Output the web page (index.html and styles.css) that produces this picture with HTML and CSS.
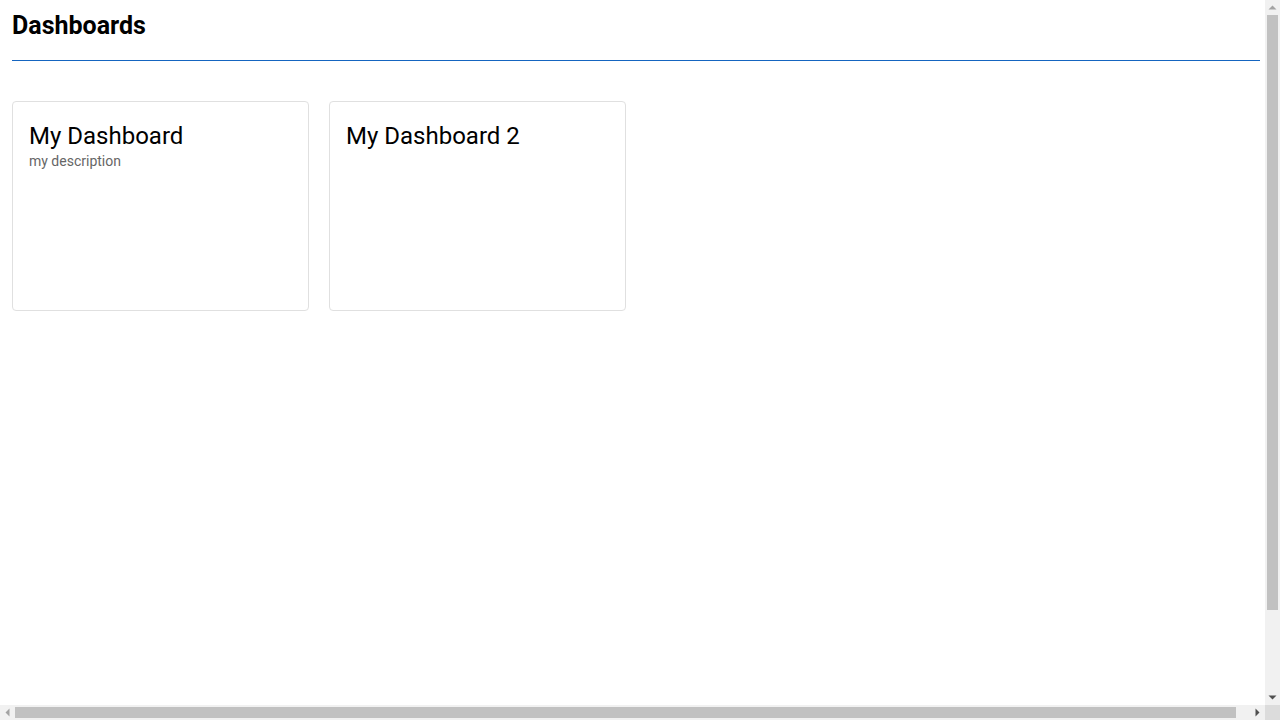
FILE: index.html
```html
<!DOCTYPE html>
<html lang="en">
<head>
<meta charset="utf-8">
<title>Dashboards</title>
<link rel="stylesheet" href="styles.css">
</head>
<body>
<div class="page">
  <header class="page-header">
    <h1 class="page-title">Dashboards</h1>
  </header>
  <main class="card-list">
    <section class="card">
      <h2 class="card-title">My Dashboard</h2>
      <p class="card-desc">my description</p>
    </section>
    <section class="card">
      <h2 class="card-title">My Dashboard 2</h2>
    </section>
  </main>
</div>

<div class="sb sb-v" aria-hidden="true">
  <div class="sb-btn">
    <svg width="15" height="15" viewBox="0 0 15 15"><polygon points="3.5,9.5 11.5,9.5 7.5,5.5" fill="#a3a3a3"/></svg>
  </div>
  <div class="sb-track sb-track-v"><div class="sb-thumb sb-thumb-v"></div></div>
  <div class="sb-btn">
    <svg width="15" height="15" viewBox="0 0 15 15"><polygon points="3.5,5.5 11.5,5.5 7.5,9.5" fill="#505050"/></svg>
  </div>
</div>
<div class="sb sb-h" aria-hidden="true">
  <div class="sb-btn">
    <svg width="15" height="15" viewBox="0 0 15 15"><polygon points="9.5,3.5 9.5,11.5 5.5,7.5" fill="#a3a3a3"/></svg>
  </div>
  <div class="sb-track sb-track-h"><div class="sb-thumb sb-thumb-h"></div></div>
  <div class="sb-btn">
    <svg width="15" height="15" viewBox="0 0 15 15"><polygon points="5.5,3.5 5.5,11.5 9.5,7.5" fill="#505050"/></svg>
  </div>
</div>
<div class="sb-corner" aria-hidden="true"></div>
</body>
</html>
```

FILE: styles.css
```css
html, body {
  margin: 0;
  padding: 0;
  overflow: hidden;
  background: #ffffff;
}

body {
  font-family: Roboto, "Liberation Sans", Arial, sans-serif;
  color: #000000;
}

.page {
  box-sizing: border-box;
  width: 1280px;
  min-height: 800px;
  padding: 13px 20px 12px 12px;
}

.page-header {
  height: 47px;
  border-bottom: 1px solid #1565c0;
}

.page-title {
  margin: 0;
  font-size: 25px;
  font-weight: 700;
  line-height: 26px;
}

.card-list {
  display: flex;
  gap: 20px;
  margin-top: 40px;
  align-items: flex-start;
}

.card {
  box-sizing: border-box;
  width: 297px;
  height: 210px;
  border: 1px solid #e0e0e0;
  border-radius: 4px;
  padding: 18px 16px 16px;
}

.card-title {
  margin: 0;
  font-size: 24px;
  font-weight: 400;
  line-height: 32px;
}

.card-desc {
  margin: 0;
  font-size: 14px;
  line-height: 18px;
  color: #666666;
}

/* Browser scrollbars (drawn over the page) */
.sb {
  position: fixed;
  display: flex;
  background: #f1f1f1;
}

.sb-v {
  top: 0;
  right: 0;
  width: 15px;
  height: 705px;
  flex-direction: column;
}

.sb-h {
  left: 0;
  bottom: 0;
  width: 1265px;
  height: 15px;
  flex-direction: row;
}

.sb-btn {
  flex: 0 0 15px;
  width: 15px;
  height: 15px;
}

.sb-btn svg {
  display: block;
}

.sb-track {
  flex: 1 1 auto;
  display: flex;
}

.sb-track-v {
  flex-direction: column;
  padding: 0 2px;
}

.sb-track-h {
  flex-direction: row;
  padding: 2px 0;
}

.sb-thumb {
  background: #c1c1c1;
}

.sb-thumb-v {
  height: 595px;
}

.sb-thumb-h {
  width: 1221px;
}

.sb-corner {
  position: fixed;
  right: 0;
  bottom: 0;
  width: 15px;
  height: 15px;
  background: #dcdcdc;
}
```
